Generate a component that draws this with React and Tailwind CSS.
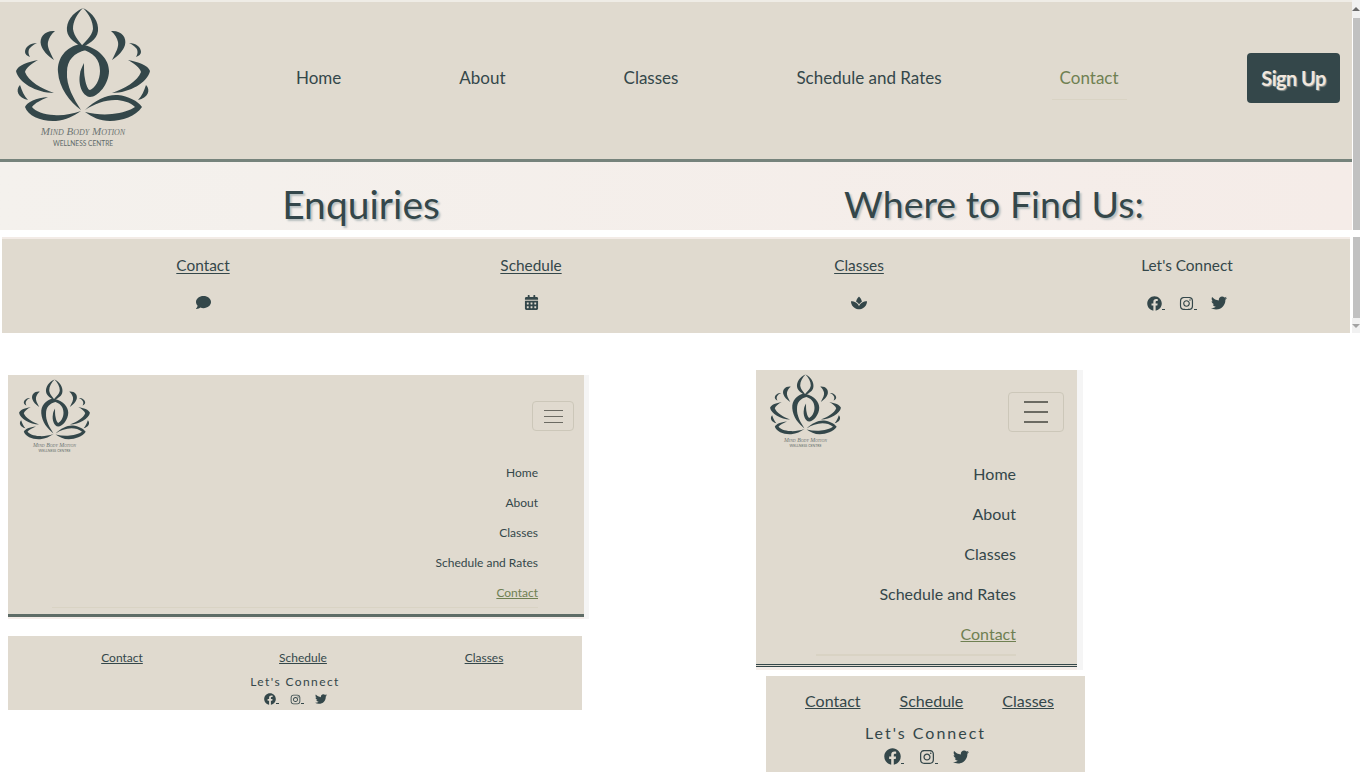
import { FaComment, FaCalendarAlt, FaSpa, FaFacebook, FaInstagram, FaTwitter } from 'react-icons/fa';

const navLinks = ['Home', 'About', 'Classes', 'Schedule and Rates'];

// Lotus logo, drawn in the coordinates of the big header copy
function Logo({ className }) {
  const petals = (
    <>
      <path d="M55 31 C45 30 39 37 41 45 C43 51 47 55 54 60 C50 52 47 47 48 42 C49 38 51 34 55 31Z" />
      <path d="M37 43 C30 43 25 47 25 52 C25 54 27 56 30 57 C28 54 28 50 30 48 C32 46 34 44 37 43Z" />
      <path d="M38 60 C28 62 18 65 16 71 C18 82 36 93 54 93 C42 89 28 81 25 72 C26 68 31 64 38 60Z" />
      <path d="M20 85 C15 90 18 98 28 100 C24 96 22 91 20 85Z" />
    </>
  );
  return (
    <svg viewBox="14 6 138 142" className={className} fill="#34474a">
      <path d="M83 8 C72 13 66 22 67 31 C68 39 76 43 86 50 C80 42 74 37 73 29 C73 21 77 14 83 8Z" />
      <path d="M83 8 C93 13 99 22 98 31 C97 40 88 44 78 50 C84 42 92 37 93 29 C93 21 89 14 83 8Z" />
      <path d="M80 44 C66 47 57 58 58 72 C59 88 70 102 81 110 C74 99 66 86 67 72 C67 60 74 53 86 50Z" />
      <path d="M84 45 C100 49 109 60 109 71 C109 84 98 97 90 97 C82 96 78 84 80 74 C80 71 82 67 84 63 C84 70 84 75 85 79 C86 85 88 90 90 90 C95 88 100 80 100 71 C100 60 94 52 80 49Z" />
      {petals}
      <g transform="translate(166 0) scale(-1 1)">{petals}</g>
      <path d="M48 97 C36 98 27 102 25 107 C28 116 42 122 56 121 C66 120 74 116 81 111 C72 114 62 116 54 115 C44 115 35 111 32 107 C35 103 41 100 48 97Z" />
      <path d="M85 110 C95 100 108 94 118 95 C128 96 138 101 142 107 C136 116 122 121 110 121 C100 121 92 117 85 112 C94 114 103 115 112 114 C122 113 131 110 135 107 C130 102 122 100 115 100 C105 100 94 104 85 110Z" />
      <text x="83" y="135" textAnchor="middle" fontSize="11" fontStyle="italic" fontVariant="small-caps" fontFamily="'Liberation Serif', serif" fill="#6d7573">Mind Body Motion</text>
      <text x="83" y="146" textAnchor="middle" fontSize="6.6" fontFamily="Lato, sans-serif" fill="#5f6a69">WELLNESS CENTRE</text>
    </svg>
  );
}

// Facebook and Instagram links show a bit of underline after the icon
function IconLink({ icon: Icon, size, dash }) {
  return (
    <span className="flex items-end">
      <Icon size={size} />
      {dash && <span className="w-[3px] h-px bg-[#34474a] mb-[1px]" />}
    </span>
  );
}

function Hamburger({ className, lineClass }) {
  return (
    <div className={`flex flex-col justify-center items-center border border-[#ccc7b9] rounded ${className}`}>
      <span className={`block bg-[#6b6a62] ${lineClass}`} />
      <span className={`block bg-[#6b6a62] ${lineClass}`} />
      <span className={`block bg-[#6b6a62] ${lineClass}`} />
    </div>
  );
}

function TopSection() {
  return (
    <div className="flex">
      <div className="w-[1352px]">
        <header className="h-[162px] bg-[#e0dacf] border-t-2 border-t-[#efece6] border-b-[3px] border-b-[#76837c] flex items-start">
          <Logo className="w-[138px] h-[142px] ml-[14px] mt-[4px] shrink-0" />
          <nav className="ml-[144px] mt-[64px] flex gap-[118px] text-[17px] leading-[24px]">
            {navLinks.map((l) => <a key={l}>{l}</a>)}
            <a className="text-[#6f8052] relative">
              Contact
              <span className="absolute -left-2 -right-2 top-[33px] h-px bg-[#d9d3c4]" />
            </a>
          </nav>
          <button className="ml-auto mr-3 mt-[51px] w-[93px] h-[50px] bg-[#34474a] rounded text-[#f0e6dc] text-[20px] font-bold tracking-[-0.6px] [text-shadow:1px_1px_1px_#8d9694]">
            Sign Up
          </button>
        </header>
        <section className="h-[68px] bg-gradient-to-r from-[#f4f1ed] to-[#f5ece8] grid grid-cols-[722px_544px] text-center leading-[84px] [text-shadow:2px_2px_2px_#b9c0c0]">
          <h1 className="text-[39px]">Enquiries</h1>
          <h1 className="text-[37.5px]">Where to Find Us:</h1>
        </section>
        <footer className="mt-[7px] ml-[2px] w-[1348px] h-[96px] bg-[#e0dacf] border-t-2 border-t-[#f3ebe6] grid grid-cols-[repeat(4,328px)] pl-[37px] text-[15.4px] leading-[24px] pt-[14px]">
          <div className="flex flex-col items-center gap-[18px]">
            <a className="underline underline-offset-2">Contact</a>
            <FaComment size={15} />
          </div>
          <div className="flex flex-col items-center gap-[18px]">
            <a className="underline underline-offset-2">Schedule</a>
            <FaCalendarAlt size={15} />
          </div>
          <div className="flex flex-col items-center gap-[18px]">
            <a className="underline underline-offset-2">Classes</a>
            <FaSpa size={16} />
          </div>
          <div className="flex flex-col items-center gap-[18px]">
            <span>Let's Connect</span>
            <div className="flex items-center gap-[14px] pr-[1px]">
              <IconLink icon={FaFacebook} size={15} dash />
              <IconLink icon={FaInstagram} size={15} dash />
              <IconLink icon={FaTwitter} size={16} />
            </div>
          </div>
        </footer>
      </div>
      {/* two scrollbars, one per frame */}
      <div className="w-2 flex flex-col">
        <div className="h-[230px] flex flex-col">
          <div className="h-[18px] bg-[#f1f1f1] flex items-center justify-center">
            <div className="w-0 h-0 border-x-[4px] border-x-transparent border-b-[4px] border-b-[#6a6a6a]" />
          </div>
          <div className="flex-1 ml-px bg-[#c1c1c1]" />
        </div>
        <div className="h-[7px]" />
        <div className="h-[96px] flex flex-col">
          <div className="flex-1 ml-px bg-[#c1c1c1]" />
          <div className="h-[15px] bg-[#f1f1f1] flex items-center justify-center">
            <div className="w-0 h-0 border-x-[4px] border-x-transparent border-t-[4px] border-t-[#a3a3a3]" />
          </div>
        </div>
      </div>
    </div>
  );
}

function SmallPreview() {
  return (
    <div className="w-[581px] mt-[5px] ml-2">
      <div className="flex bg-[#f5f5f5] w-[581px]">
        <div className="w-[576px]">
          <div className="h-[242px] bg-[#e0dacf] border-b-[3px] border-b-[#5e6c66] pt-[3px] px-[10px] text-[12px] leading-[18px]">
            <div className="flex items-start justify-between">
              <Logo className="w-[73px] h-[76px]" />
              <Hamburger className="w-[42px] h-[30px] mt-[23px] gap-[5px]" lineClass="w-[19px] h-px" />
            </div>
            <nav className="mt-[10px] flex flex-col items-end gap-3 pr-[36px]">
              {navLinks.map((l) => <a key={l}>{l}</a>)}
              <a className="text-[#6f8052] underline">Contact</a>
            </nav>
            <div className="ml-[34px] mr-[36px] mt-[5px] h-px bg-[#d9d3c4]" />
          </div>
          <div className="h-[2px] bg-[#f5ede9]" />
        </div>
      </div>
      <footer className="mt-[17px] w-[574px] h-[74px] bg-[#e0dacf] text-[12px] leading-[18px]">
        <div className="grid grid-cols-[228px_134px_228px] pt-[13px] text-center">
          <a className="underline">Contact</a>
          <a className="underline">Schedule</a>
          <a className="underline">Classes</a>
        </div>
        <p className="text-center mt-[6px] tracking-[1.4px]">Let's Connect</p>
        <div className="flex justify-center items-center gap-[11px] mt-[2px]">
          <IconLink icon={FaFacebook} size={12} dash />
          <IconLink icon={FaInstagram} size={11} dash />
          <IconLink icon={FaTwitter} size={12} />
        </div>
      </footer>
    </div>
  );
}

function MediumPreview() {
  return (
    <div className="ml-[167px] w-[329px]">
      <div className="flex bg-[#f5f5f5] w-[327px]">
        <div className="w-[321px]">
          <div className="h-[297px] bg-[#e0dacf] border-b-[3px] border-double border-b-[#34474a] text-[16px] leading-[24px]">
            <div className="flex items-start justify-between px-[13px] pt-[3px]">
              <Logo className="w-[73px] h-[76px]" />
              <Hamburger className="w-[56px] h-[40px] mt-[19px] gap-2" lineClass="w-[24px] h-[2px]" />
            </div>
            <nav className="mt-[13px] flex flex-col items-end gap-4 pr-[61px]">
              {navLinks.map((l) => <a key={l}>{l}</a>)}
              <a className="text-[#6f8052] underline">Contact</a>
            </nav>
            <div className="ml-[60px] mr-[61px] mt-[8px] h-0.5 bg-[#d9d3c4]" />
          </div>
          <div className="h-[3px] bg-[#f5ede9]" />
        </div>
      </div>
      <footer className="mt-[6px] ml-[10px] w-[319px] h-[96px] bg-[#e0dacf] text-[16px] leading-[24px]">
        <div className="flex justify-center gap-[39px] pt-[13px] pl-2">
          <a className="underline">Contact</a>
          <a className="underline">Schedule</a>
          <a className="underline">Classes</a>
        </div>
        <p className="text-center mt-[8px] tracking-[2px]">Let's Connect</p>
        <div className="flex justify-center items-center gap-[15px] mt-[3px] pl-[1px]">
          <IconLink icon={FaFacebook} size={17} dash />
          <IconLink icon={FaInstagram} size={16} dash />
          <IconLink icon={FaTwitter} size={16} />
        </div>
      </footer>
    </div>
  );
}

export default function App() {
  return (
    <div className="w-[1360px] h-[784px] overflow-hidden bg-white text-[#34474a] font-['Lato',sans-serif]">
      <TopSection />
      <div className="flex items-start mt-[37px]">
        <SmallPreview />
        <MediumPreview />
      </div>
    </div>
  );
}
